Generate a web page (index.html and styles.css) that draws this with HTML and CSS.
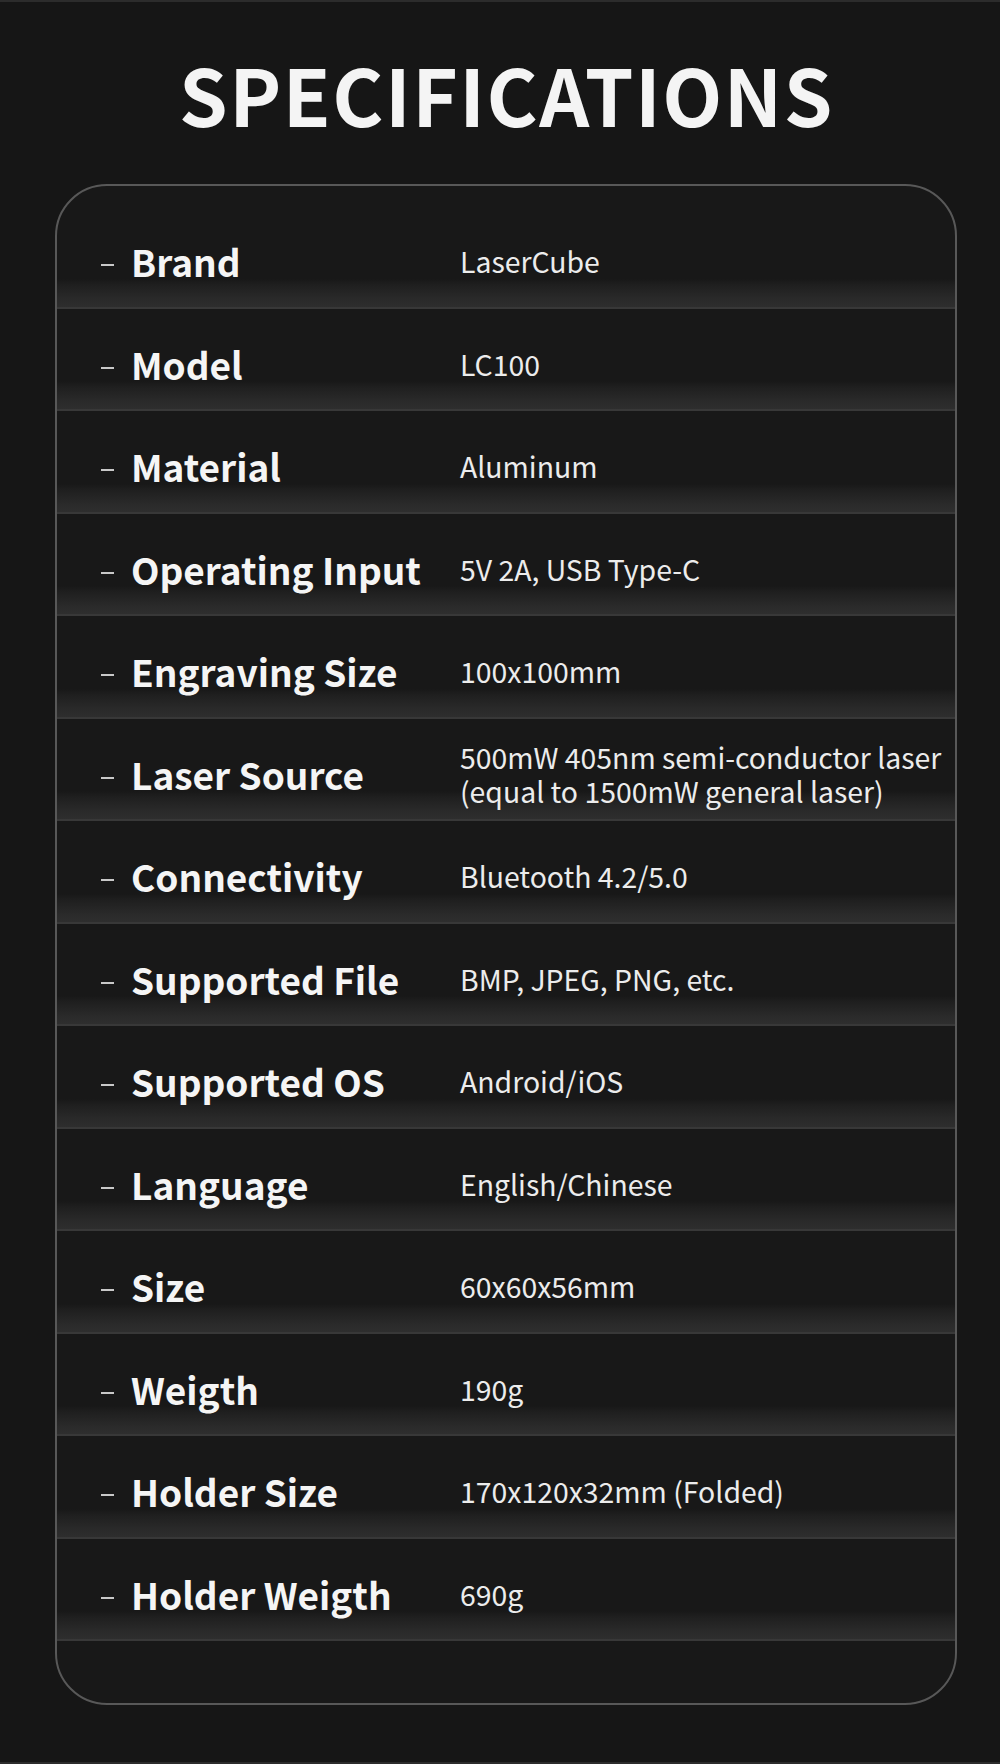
FILE: index.html
```html
<!DOCTYPE html>
<html lang="en">
<head>
<meta charset="utf-8">
<title>Specifications</title>
<link rel="stylesheet" href="styles.css">
</head>
<body>
<main class="page">
  <h1 class="title">SPECIFICATIONS</h1>
  <section class="card">
    <div class="row"><span class="dash"></span><span class="label">Brand</span><span class="value">LaserCube</span></div>
    <div class="row"><span class="dash"></span><span class="label">Model</span><span class="value">LC100</span></div>
    <div class="row"><span class="dash"></span><span class="label">Material</span><span class="value">Aluminum</span></div>
    <div class="row"><span class="dash"></span><span class="label">Operating Input</span><span class="value">5V 2A, USB Type-C</span></div>
    <div class="row"><span class="dash"></span><span class="label">Engraving Size</span><span class="value">100x100mm</span></div>
    <div class="row"><span class="dash"></span><span class="label">Laser Source</span><span class="value">500mW 405nm semi-conductor laser<br>(equal to 1500mW general laser)</span></div>
    <div class="row"><span class="dash"></span><span class="label">Connectivity</span><span class="value">Bluetooth 4.2/5.0</span></div>
    <div class="row"><span class="dash"></span><span class="label">Supported File</span><span class="value">BMP, JPEG, PNG, etc.</span></div>
    <div class="row"><span class="dash"></span><span class="label">Supported OS</span><span class="value">Android/iOS</span></div>
    <div class="row"><span class="dash"></span><span class="label">Language</span><span class="value">English/Chinese</span></div>
    <div class="row"><span class="dash"></span><span class="label">Size</span><span class="value">60x60x56mm</span></div>
    <div class="row"><span class="dash"></span><span class="label">Weigth</span><span class="value">190g</span></div>
    <div class="row"><span class="dash"></span><span class="label">Holder Size</span><span class="value">170x120x32mm (Folded)</span></div>
    <div class="row"><span class="dash"></span><span class="label">Holder Weigth</span><span class="value">690g</span></div>
  </section>
</main>
</body>
</html>
```
FILE: styles.css
```css
html, body {
  margin: 0;
  padding: 0;
  background: #161616;
}
body {
  font-family: "Noto Sans CJK SC", "Noto Sans", sans-serif;
  color: #f2f2f2;
}
.page {
  height: 1764px;
  box-sizing: border-box;
  border-top: 2px solid #2c2c2c;
  border-bottom: 2px solid #2c2c2c;
  padding-top: 52px;
}
.title {
  margin: 0 0 52px 0;
  padding-left: 13px;
  font-size: 78px;
  line-height: 78px;
  font-weight: 700;
  letter-spacing: 1.5px;
  text-align: center;
  color: #f4f4f4;
}
.card {
  margin-left: 55px;
  width: 902px;
  box-sizing: border-box;
  border: 2px solid #585858;
  border-radius: 52px;
  background: #181818;
  padding: 20px 0 62px 0;
}
.row {
  display: grid;
  grid-template-columns: 44px 13px 17px 329px 1fr;
  align-items: center;
  height: 102.5px;
  box-sizing: border-box;
  padding-top: 10px;
  border-bottom: 2px solid #383838;
  background: linear-gradient(to bottom, rgba(0,0,0,0) 0, rgba(0,0,0,0) calc(100% - 28px), #1f1f1f calc(100% - 22px), #2a2a2a calc(100% - 8px), #2e2e2e 100%);
}
.dash {
  grid-column: 2;
  height: 2px;
  margin-top: 8px;
  background: #c8c8c8;
}
.label {
  grid-column: 4;
  font-size: 37px;
  font-weight: 700;
  line-height: 44px;
  white-space: nowrap;
  color: #f5f5f5;
}
.value {
  grid-column: 5;
  font-size: 28.4px;
  font-weight: 400;
  line-height: 34px;
  color: #ececec;
  white-space: nowrap;
}
```
